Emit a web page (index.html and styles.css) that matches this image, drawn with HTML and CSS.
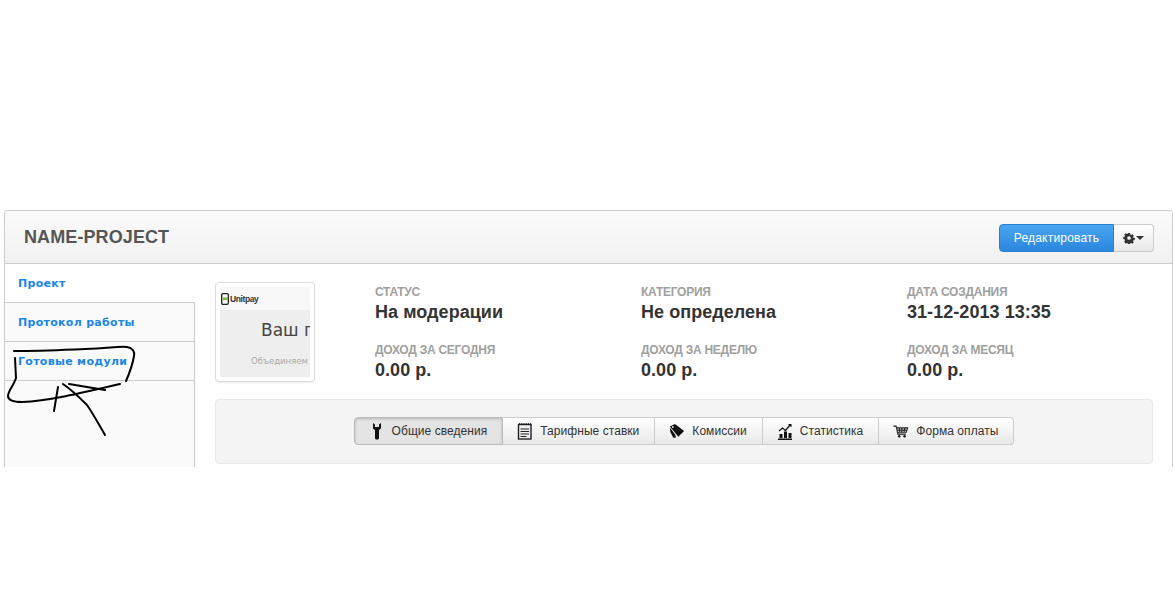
FILE: index.html
```html
<!DOCTYPE html>
<html lang="ru">
<head>
<meta charset="utf-8">
<title>NAME-PROJECT</title>
<link rel="stylesheet" href="styles.css">
</head>
<body>
<main class="panel">
  <header class="panel-head">
    <h1 class="title">NAME-PROJECT</h1>
    <div class="actions">
      <button class="btn-edit">Редактировать</button>
      <button class="btn-gear" aria-label="Настройки">
        <svg width="12" height="12" viewBox="0 0 12 12"><path fill="#333" fill-rule="evenodd" d="M4.900.6h2.200l.3 1.500 1 .5 1.300-.8 1.500 1.500-.8 1.300.4 1 1.500.3v2.200l-1.500.3-.4 1 .8 1.300-1.500 1.500-1.300-.8-1 .4-.3 1.600H4.900l-.3-1.600-1-.4-1.300.8L.8 9.700l.8-1.300-.4-1L-.3 7V4.900l1.500-.3.4-1-.8-1.300L2.300.8l1.300.8 1-.5zM6 4a2 2 0 1 0 0 4 2 2 0 0 0 0-4z" transform="translate(.5 .5) scale(.92)"/></svg>
        <span class="caret"></span>
      </button>
    </div>
  </header>
  <div class="panel-body">
    <nav class="side">
      <a class="side-item active">Проект</a>
      <a class="side-item">Протокол работы</a>
      <a class="side-item">Готовые модули</a>
    </nav>
    <section class="content">
      <div class="summary">
        <div class="thumb">
          <div class="shot">
            <div class="shot-top">
              <svg width="8" height="12" viewBox="0 0 8 12"><rect x=".7" y=".7" width="6.600" height="10.600" rx="1.300" fill="none" stroke="#222" stroke-width="1.300"/><rect x="1.500" y="4.500" width="5" height="2.500" fill="#7ab648"/></svg>
              <span class="brand">Unitpay</span>
            </div>
            <div class="shot-main">
              <div class="shot-head">Ваш п</div>
              <div class="shot-sub">Объединяем</div>
            </div>
          </div>
        </div>
        <div class="stats">
          <div class="stat"><div class="stat-label">Статус</div><div class="stat-value">На модерации</div></div>
          <div class="stat"><div class="stat-label">Категория</div><div class="stat-value">Не определена</div></div>
          <div class="stat"><div class="stat-label">Дата создания</div><div class="stat-value">31-12-2013 13:35</div></div>
          <div class="stat"><div class="stat-label">Доход за сегодня</div><div class="stat-value">0.00 р.</div></div>
          <div class="stat"><div class="stat-label">Доход за неделю</div><div class="stat-value">0.00 р.</div></div>
          <div class="stat"><div class="stat-label">Доход за месяц</div><div class="stat-value">0.00 р.</div></div>
        </div>
      </div>
      <div class="well">
        <div class="tabs">
          <button class="tab tab-on">
            <svg class="tab-icon" width="16" height="18" viewBox="0 0 16 18"><path fill="#111" d="M4 1v4.500c0 1 .8 2 2 2.500v8c0 1 .7 1.500 2 1.500s2-.5 2-1.500V8c1.200-.5 2-1.500 2-2.500V1l-2 1.500V5H6V2.500z"/></svg>
            Общие сведения
          </button>
          <button class="tab">
            <svg class="tab-icon" width="16" height="18" viewBox="0 0 16 18"><rect x="1.500" y="2.500" width="12.500" height="14.500" fill="#eee" stroke="#222" stroke-width="1.400"/><path stroke="#222" stroke-width="1" d="M3.500 7h8.500M3.500 9.500h8.500M3.500 12h8.500M3.500 14.500h6"/><path stroke="#111" stroke-width="1.300" stroke-dasharray="1.200 1" d="M2 2h12"/></svg>
            Тарифные ставки
          </button>
          <button class="tab">
            <svg class="tab-icon" width="16" height="18" viewBox="0 0 18 18"><path fill="#111" d="M1 4l5-2.500 1.500.3L17 9l-6.500 6.500z"/><path fill="#111" d="M1 5l5.500 7.500 1.500 3.500-3 1L1.500 10z"/><circle cx="4.300" cy="4.500" r="1" fill="#eee"/></svg>
            Комиссии
          </button>
          <button class="tab">
            <svg class="tab-icon" width="16" height="18" viewBox="0 0 16 18"><path fill="#111" d="M1 16.500h14V18H1zM2.500 12h3v4h-3zM7 9.500h3V16H7zM11.500 11h3v5h-3z"/><path fill="none" stroke="#111" stroke-width="1.300" d="M2 9l3.500-3 3 2.500L13 3"/><path fill="#111" d="M11 2h3.500v3.500z"/></svg>
            Статистика
          </button>
          <button class="tab">
            <svg class="tab-icon" width="16" height="18" viewBox="0 0 18 18"><path fill="none" stroke="#222" stroke-width="1.200" d="M.5 3.500h3l2 9h9M4 5.500h12.500L15 10.500H5.200M7 5.500l.8 5M10 5.500v5M13.200 5.500l-.7 5M4.500 8h11.300"/><circle cx="7" cy="15" r="1.400" fill="#111"/><circle cx="13" cy="15" r="1.400" fill="#111"/></svg>
            Форма оплаты
          </button>
        </div>
      </div>
    </section>
  </div>
</main>
<svg class="scribble" width="140" height="100" viewBox="0 340 140 100" aria-hidden="true">
  <g fill="none" stroke="#000" stroke-width="2" stroke-linecap="round" stroke-linejoin="round">
    <path d="M14 351C40 351 60 350 85 349S120 346 127 347C133 348 135 352 134 356C133 362 130 372 126 381"/>
    <path d="M15 358L16 378C14 385 8 391 8 396C8 401 14 402 22 402C50 401 90 391 120 384"/>
    <path d="M58 387L54 411"/>
    <path d="M69 384L105 390"/>
    <path d="M63 384C72 390 80 398 87 405C92 412 98 423 105 435"/>
  </g>
</svg>
</body>
</html>
```
FILE: styles.css
```css
* { box-sizing: border-box; }
html, body { margin: 0; height: 600px; overflow: hidden; background: #fff; }
body {
  position: relative;
  padding: 210px 0 0 4px;
  font-family: "Liberation Sans", Arial, sans-serif;
  color: #333;
}
.panel {
  height: 257px;
  overflow: hidden;
  border: 1px solid #ccc;
  border-width: 1px 1px 0 1px;
  border-radius: 4px 4px 0 0;
}
.panel-head {
  height: 53px;
  display: flex;
  align-items: center;
  justify-content: space-between;
  padding: 0 18px 0 19px;
  background: linear-gradient(#fbfbfb, #f1f1f1);
  border-bottom: 1px solid #ccc;
}
.title { margin: 0; font-size: 18px; font-weight: bold; letter-spacing: .1px; color: #555; }
.actions { display: flex; margin-top: 1px; }
.btn-edit {
  width: 115px;
  height: 28px;
  padding: 0;
  font: 12px "Liberation Sans", Arial, sans-serif;
  letter-spacing: .2px;
  color: #fff;
  background: linear-gradient(#4aa5f0, #2a86de);
  border: 1px solid #2b7fd0;
  border-radius: 4px 0 0 4px;
}
.btn-gear {
  width: 40px;
  height: 28px;
  padding: 0;
  display: flex;
  align-items: center;
  justify-content: center;
  gap: 1px;
  background: linear-gradient(#fff, #e8e8e8);
  border: 1px solid #ccc;
  border-left: 0;
  border-radius: 0 4px 4px 0;
}
.caret {
  width: 0;
  height: 0;
  border: 4px solid transparent;
  border-top-color: #333;
  border-bottom: 0;
}
.panel-body { display: flex; height: 203px; }
.side {
  flex: 0 0 190px;
  background: #fafafa;
  border-right: 1px solid #ccc;
}
.side-item {
  display: block;
  height: 39px;
  padding: 13px 0 0 13px;
  font: bold 11px "DejaVu Sans", Verdana, sans-serif;
  line-height: 14px;
  letter-spacing: .3px;
  color: #1a86e8;
  border-bottom: 1px solid #ccc;
}
.side-item.active {
  background: #fff;
  margin-right: -1px;
}
.content { flex: 1; padding: 18px 19px 0 20px; min-width: 0; background: #fff; }
.summary { display: flex; height: 100px; }
.thumb {
  flex: 0 0 100px;
  height: 100px;
  padding: 4px;
  background: #fff;
  border: 1px solid #ddd;
  border-radius: 4px;
  box-shadow: 0 1px 2px rgba(0, 0, 0, .08);
}
.shot { width: 90px; height: 90px; overflow: hidden; background: #eee; }
.shot-top {
  height: 23px;
  display: flex;
  align-items: center;
  gap: 1px;
  padding-left: 1px;
  background: #f8f8f8;
}
.brand { font-size: 8.500px; font-weight: bold; letter-spacing: -.4px; color: #333; }
.shot-main { white-space: nowrap; padding: 10px 0 0 41px; }
.shot-head { font: 17px/20px "DejaVu Sans", sans-serif; color: #444; }
.shot-sub { margin: 15px 0 0 -10px; font: 8.500px/12px "DejaVu Sans", sans-serif; color: #aaa; }
.stats {
  flex: 1;
  margin-left: 60px;
  display: grid;
  grid-template-columns: repeat(3, 266px);
  grid-auto-rows: 58px;
  padding-top: 3px;
}
.stat-label {
  font-size: 12px;
  line-height: 15px;
  font-weight: bold;
  letter-spacing: -.25px;
  text-transform: uppercase;
  color: #a0a0a0;
}
.stat-value { font-size: 18px; line-height: 25px; font-weight: bold; letter-spacing: .05px; color: #333; }
.well {
  margin-top: 17px;
  height: 65px;
  display: flex;
  justify-content: center;
  padding-top: 17px;
  background: #f4f4f4;
  border: 1px solid #e8e8e8;
  border-radius: 4px;
}
.tabs { display: flex; height: 28px; }
.tab {
  height: 28px;
  padding: 0 15px 0 14px;
  display: flex;
  align-items: center;
  gap: 7px;
  font: 12px "Liberation Sans", Arial, sans-serif;
  letter-spacing: .05px;
  color: #333;
  background: linear-gradient(#fff, #e9e9e9);
  border: 1px solid #ccc;
  border-left: 0;
}
.tab:first-child { border-left: 1px solid #bbb; border-radius: 4px 0 0 4px; }
.tab:last-child { border-radius: 0 4px 4px 0; }
.tab-on { background: #e4e4e4; box-shadow: inset 0 1px 3px rgba(0, 0, 0, .2); border-color: #bbb; }
.tab-icon { flex: none; }
.scribble { position: absolute; left: 0; top: 340px; }
```
